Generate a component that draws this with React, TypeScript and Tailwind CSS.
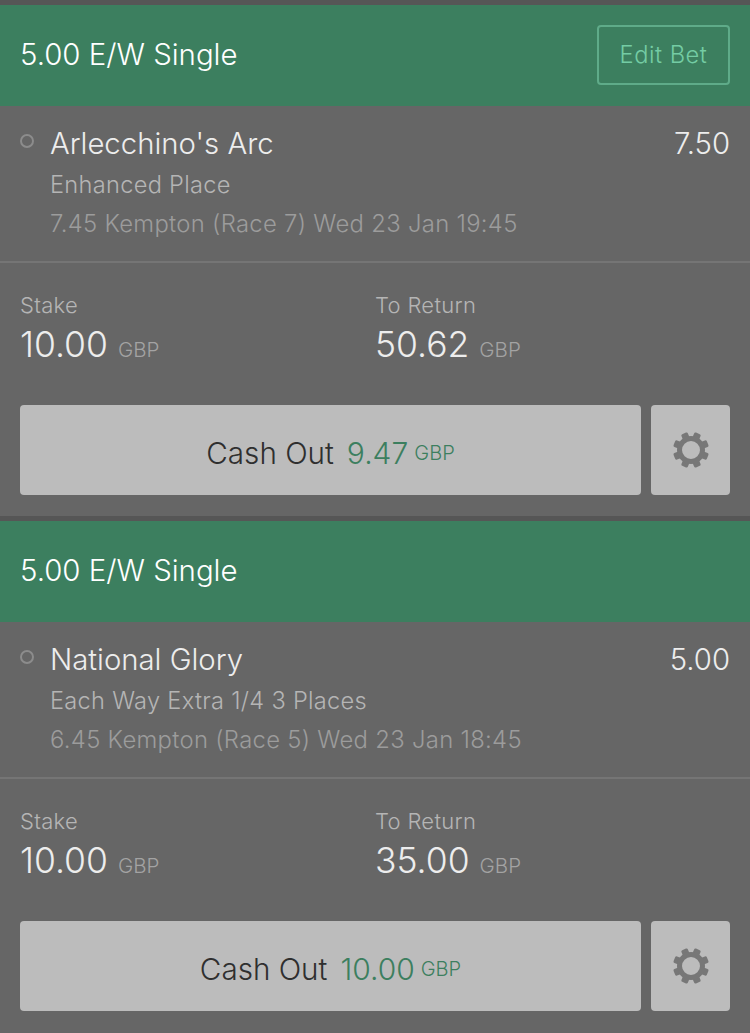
const font = "font-['Inter',sans-serif]";

function Gear() {
  return (
    <svg width="38" height="38" viewBox="0 0 38 38" aria-hidden="true">
      <g fill="#777777">
        {[0, 45, 90, 135, 180, 225, 270, 315].map((a) => (
          <rect key={a} x="15.5" y="1" width="7" height="8" rx="1.5" transform={`rotate(${a + 22.5} 19 19)`} />
        ))}
      </g>
      <circle cx="19" cy="19" r="11.5" fill="none" stroke="#777777" strokeWidth="5" />
    </svg>
  );
}

type Bet = {
  edit?: boolean;
  name: string;
  odds: string;
  market: string;
  race: string;
  stake: string;
  ret: string;
  cash: string;
};

function Card({ b }: { b: Bet }) {
  return (
    <section>
      <div className="h-[5px] bg-[#565656]" />
      <header className="h-[101px] bg-[#3c7f5f] flex items-center justify-between pl-[21px] pr-[20px]">
        <h2 className="text-[29.4px] -ml-[1px] font-light text-white">5.00 E/W Single</h2>
        {b.edit && (
          <button className="w-[133px] h-[60px] -mt-[1px] border-2 border-[#5fab89] rounded-[4px] text-[23.7px] font-light text-[#74cca4] tracking-[0.5px]">
            Edit Bet
          </button>
        )}
      </header>
      <div className="h-[157px] border-b-2 border-[#757575] pl-[20px] pr-[20px] pt-[17px] flex">
        <span className="mt-[11px] w-[14px] h-[14px] rounded-full border-2 border-[#8c8c8c] shrink-0" />
        <div className="ml-[16px] flex-1">
          <div className="flex justify-between items-center text-[29.3px] font-light leading-[42px] text-[#ededed]">
            <span>{b.name}</span>
            <span>{b.odds}</span>
          </div>
          <div className="mt-[3px] text-[23.6px] font-light leading-[34px] text-[#b5b5b5] tracking-[0.3px]">{b.market}</div>
          <div className="mt-[5px] text-[23.85px] font-light leading-[34px] text-[#9c9c9c] tracking-[0.3px]">{b.race}</div>
        </div>
      </div>
      <div className="h-[253px] bg-[#666666] px-[20px] pt-[27px]">
        <div className="flex">
          <Stat label="Stake" value={b.stake} className="w-[355px]" />
          <Stat label="To Return" value={b.ret} />
        </div>
        <div className="mt-[32px] flex gap-[10px]">
          <button className="w-[621px] h-[90px] pt-[6px] rounded-[4px] bg-[#bcbcbc] flex items-center justify-center">
            <span className="text-[29.6px] font-light text-[#2f2f2f]">Cash Out</span>
            <span className="ml-[13px] text-[30px] font-light text-[#3c7f5f]">{b.cash}</span>
            <span className="ml-[6px] text-[20px] font-light text-[#3c7f5f]">GBP</span>
          </button>
          <button className="w-[79px] h-[90px] rounded-[4px] bg-[#bcbcbc] flex items-center justify-center">
            <Gear />
          </button>
        </div>
      </div>
    </section>
  );
}

function Stat({ label, value, className = "" }: { label: string; value: string; className?: string }) {
  return (
    <div className={className}>
      <div className="text-[22px] font-light leading-[31px] text-[#b5b5b5] tracking-[0.3px]">{label}</div>
      <div className="mt-[1px] flex items-baseline leading-[46px]">
        <span className="text-[35.5px] font-light text-[#ededed]">{value}</span>
        <span className="ml-[10px] text-[20.5px] font-light text-[#a3a3a3]">GBP</span>
      </div>
    </div>
  );
}

export default function App() {
  return (
    <main className={`${font} w-[750px] h-[1033px] overflow-hidden bg-[#666666]`}>
      <Card
        b={{ edit: true, name: "Arlecchino's Arc", odds: "7.50", market: "Enhanced Place", race: "7.45 Kempton (Race 7) Wed 23 Jan 19:45", stake: "10.00", ret: "50.62", cash: "9.47" }}
      />
      <Card
        b={{ name: "National Glory", odds: "5.00", market: "Each Way Extra 1/4 3 Places", race: "6.45 Kempton (Race 5) Wed 23 Jan 18:45", stake: "10.00", ret: "35.00", cash: "10.00" }}
      />
    </main>
  );
}
